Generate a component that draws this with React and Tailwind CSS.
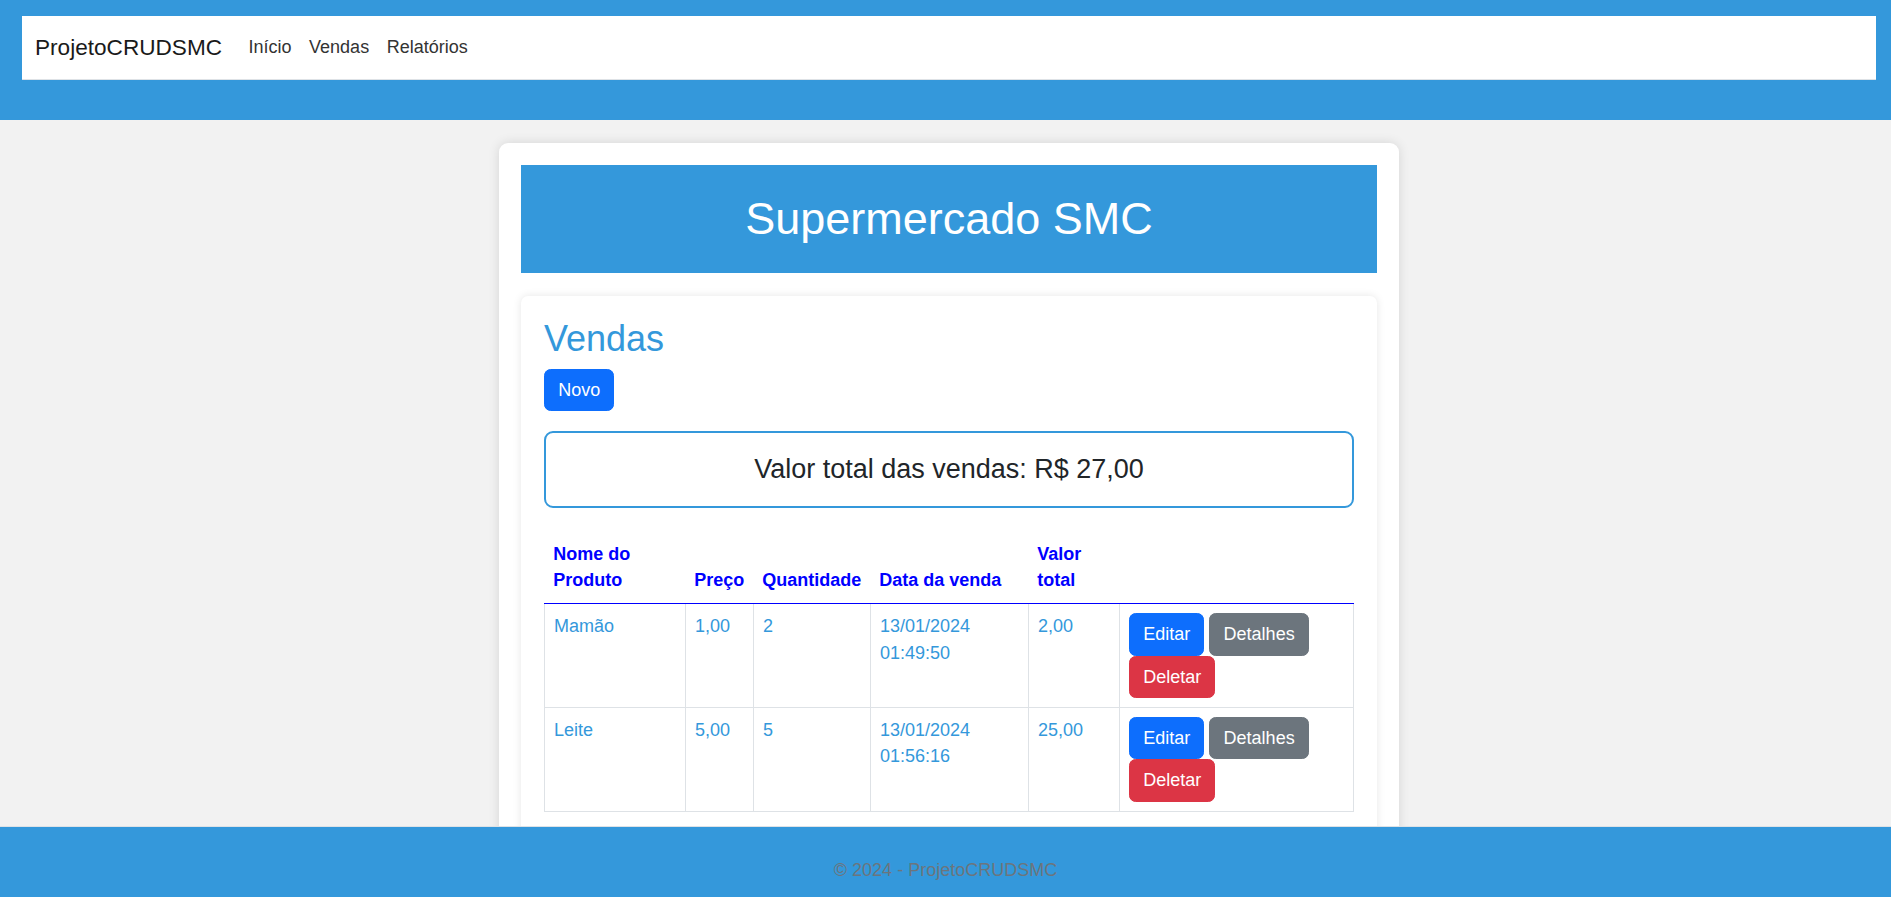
import React from "react";

const vendas = [
  { nome: "Mamão", preco: "1,00", qtd: "2", data: "13/01/2024 01:49:50", total: "2,00" },
  { nome: "Leite", preco: "5,00", qtd: "5", data: "13/01/2024 01:56:16", total: "25,00" },
];

const App = () => {
  return (
    <div className="h-screen w-full flex flex-col overflow-hidden font-['Liberation_Sans',Arial,sans-serif] text-[18px] leading-[26.4px] text-[#212529]">
      {/* top bar */}
      <header className="h-[120px] shrink-0 bg-[#3498db] pt-[16px] pl-[22px] pr-[15px]">
        <nav className="h-[64px] bg-white border-b border-[#dee2e6] flex items-center pl-[13px] pr-[14px]">
          <span className="text-[22.6px] leading-[33px] text-[#1a1a1a] mr-[17.6px]">ProjetoCRUDSMC</span>
          <a className="px-[8.8px] text-[#333]">Início</a>
          <a className="px-[8.8px] text-[#333]">Vendas</a>
          <a className="px-[8.8px] text-[#333]">Relatórios</a>
        </nav>
      </header>

      {/* content */}
      <main className="flex-1 overflow-hidden bg-[#f2f2f2] pt-[23px] pl-[7px] flex justify-center">
        <div className="w-[900px] bg-white rounded-[9px] shadow-[0_0_12px_rgba(0,0,0,0.12)] p-[22px] self-start">
          <div className="h-[108px] bg-[#3498db] flex items-center justify-center text-white text-[45px] leading-[52.8px]">
            Supermercado SMC
          </div>

          <div className="mt-[23px] bg-white rounded-[7px] shadow-[0_0_8px_rgba(0,0,0,0.1)] p-[23px] pt-[22px]">
            <h2 className="text-[36px] leading-[42.2px] text-[#3498db] mb-[8.8px]">Vendas</h2>
            <button className="bg-[#0d6efd] text-white px-[13.2px] py-[7px] border border-[#0d6efd] rounded-[6.6px]">
              Novo
            </button>

            <div className="mt-[20px] h-[77px] border-2 border-[#3498db] rounded-[9px] flex items-center justify-center text-[27px] leading-[31.7px] text-[#212529]">
              Valor total das vendas: R$ 27,00
            </div>

            <table className="mt-[23px] w-full table-fixed border-collapse">
              <colgroup>
                <col className="w-[141px]" />
                <col className="w-[68px]" />
                <col className="w-[117px]" />
                <col className="w-[158px]" />
                <col className="w-[91px]" />
                <col />
              </colgroup>
              <thead>
                <tr className="text-left text-[#0000ff] font-bold align-bottom">
                  <th className="px-[8.8px] py-[9.5px] border-b border-[#0000ff]">Nome do Produto</th>
                  <th className="px-[8.8px] py-[9.5px] border-b border-[#0000ff]">Preço</th>
                  <th className="px-[8.8px] py-[9.5px] border-b border-[#0000ff]">Quantidade</th>
                  <th className="px-[8.8px] py-[9.5px] border-b border-[#0000ff]">Data da venda</th>
                  <th className="px-[8.8px] py-[9.5px] border-b border-[#0000ff]">Valor total</th>
                  <th className="px-[8.8px] py-[9.5px] border-b border-[#0000ff]"></th>
                </tr>
              </thead>
              <tbody>
                {vendas.map((v) => (
                  <tr key={v.nome} className="align-top text-[#3498db]">
                    <td className="p-[9px] border border-[#dee2e6]">{v.nome}</td>
                    <td className="p-[9px] border border-[#dee2e6]">{v.preco}</td>
                    <td className="p-[9px] border border-[#dee2e6]">{v.qtd}</td>
                    <td className="p-[9px] border border-[#dee2e6]">{v.data}</td>
                    <td className="p-[9px] border border-[#dee2e6]">{v.total}</td>
                    <td className="p-[9px] border border-[#dee2e6]">
                      <div className="flex flex-wrap gap-x-[5px]">
                        <button className="bg-[#0d6efd] text-white px-[13.2px] py-[7px] border border-[#0d6efd] rounded-[6.6px]">
                          Editar
                        </button>
                        <button className="bg-[#6c757d] text-white px-[13.2px] py-[7px] border border-[#6c757d] rounded-[6.6px]">
                          Detalhes
                        </button>
                        <button className="bg-[#dc3545] text-white px-[13.2px] py-[7px] border border-[#dc3545] rounded-[6.6px]">
                          Deletar
                        </button>
                      </div>
                    </td>
                  </tr>
                ))}
              </tbody>
            </table>
          </div>
        </div>
      </main>

      {/* footer */}
      <footer className="h-[71px] shrink-0 border-t border-[#dee2e6] bg-[#3498db] text-center text-[#6c757d] pt-[30px]">
        © 2024 - ProjetoCRUDSMC
      </footer>
    </div>
  );
};

export default App;
